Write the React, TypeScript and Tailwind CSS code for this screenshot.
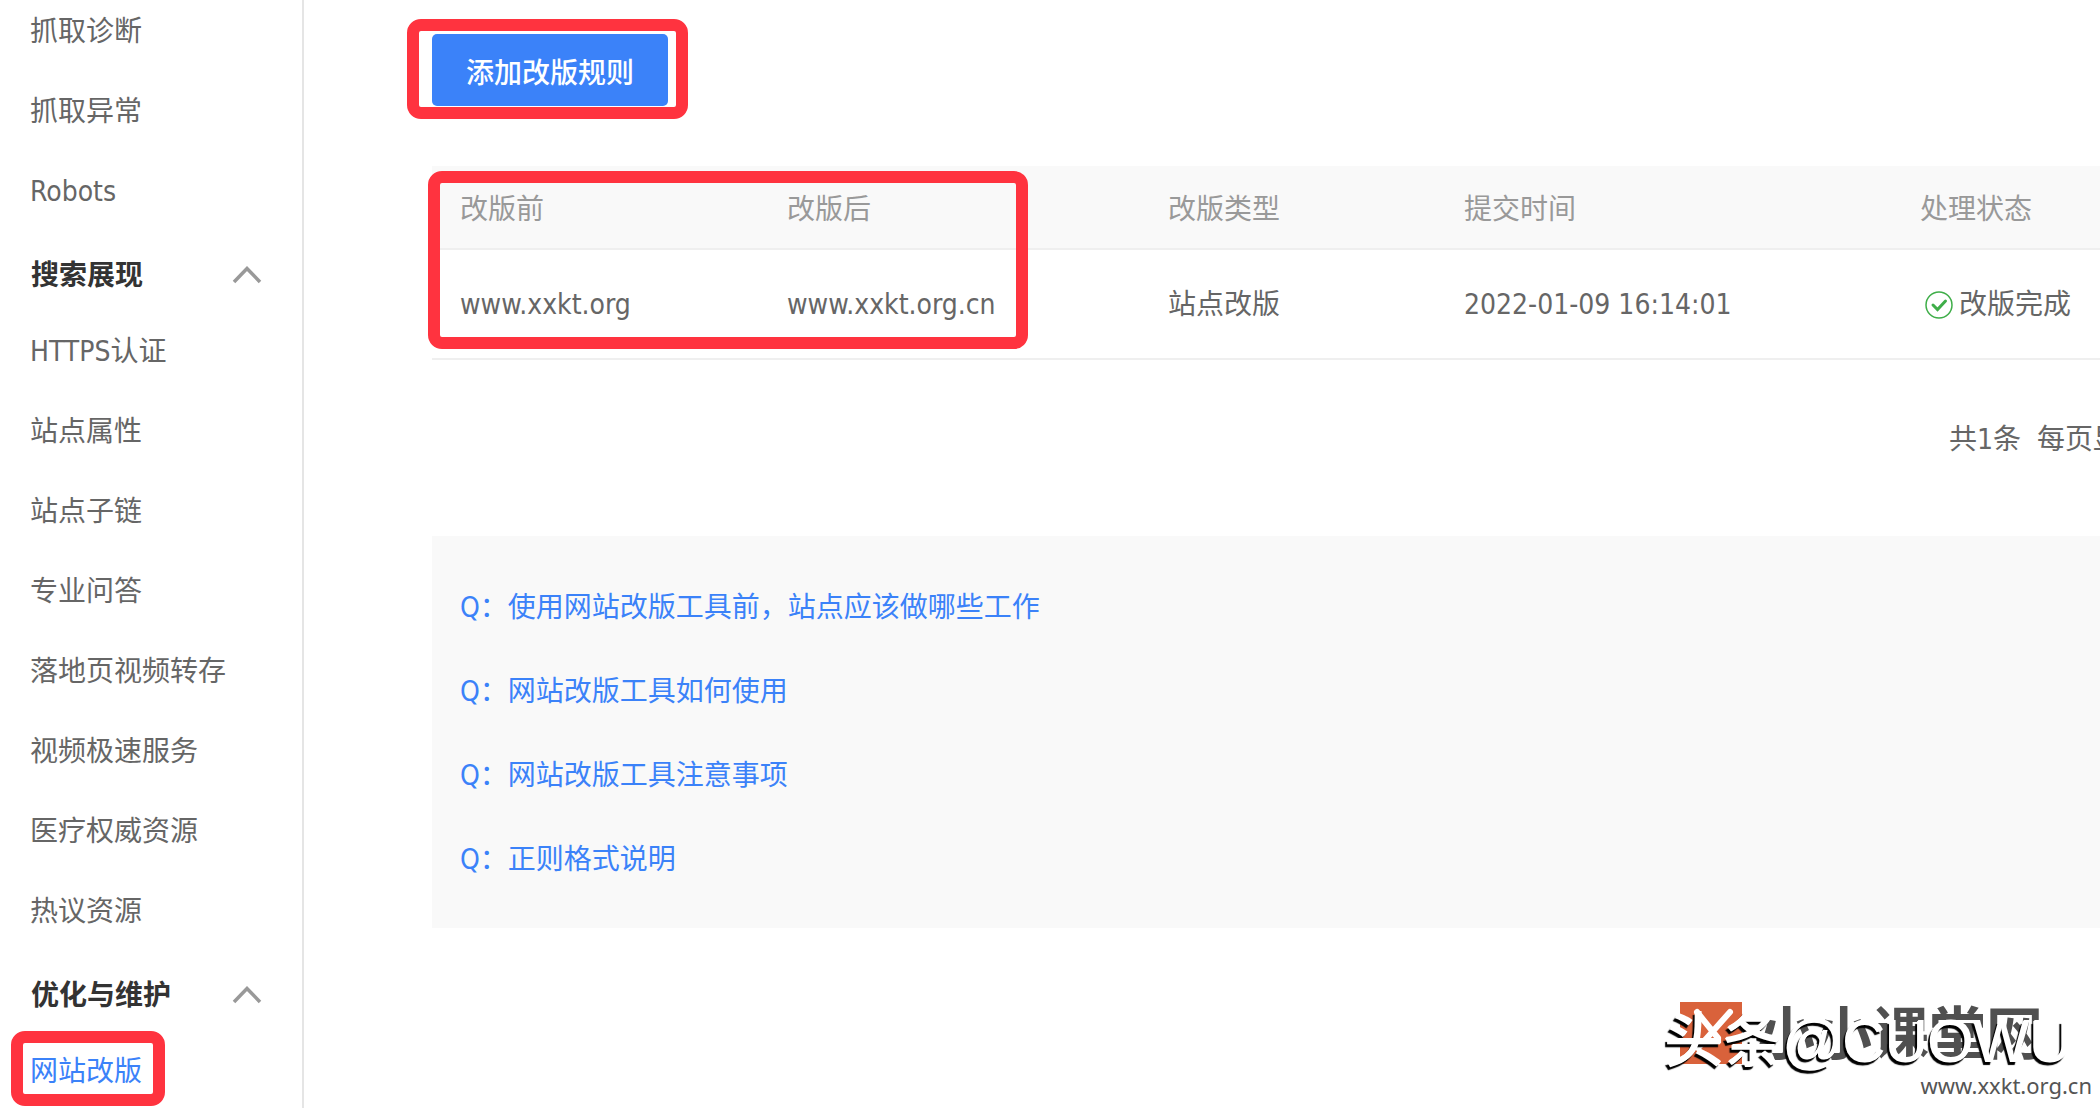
import type { ReactNode } from "react";

const BODY_FONT =
  "font-['DejaVu_Sans_Condensed','Noto_Sans_CJK_SC',sans-serif]";

function NavItem({ children }: { children: ReactNode }) {
  return (
    <li className="flex h-20 items-center pl-[30px]">
      <a href="#" className="text-[#666]">
        {children}
      </a>
    </li>
  );
}

function NavHeading({ children }: { children: ReactNode }) {
  return (
    <button
      type="button"
      className="flex h-20 w-full items-center justify-between pt-2 pr-10 pl-[31px] font-bold text-[#333]"
    >
      {children}
      <svg width="30" height="20" viewBox="0 0 30 20" fill="none" aria-hidden="true">
        <path d="M2 16 15 2.500l13 13.500" stroke="#999" strokeWidth="3.500" />
      </svg>
    </button>
  );
}

function Sidebar() {
  return (
    <nav className="w-[304px] shrink-0 border-r-2 border-[#e5e5e5]">
      <ul className="-mt-2">
        <NavItem>抓取诊断</NavItem>
        <NavItem>抓取异常</NavItem>
        <NavItem>Robots</NavItem>
      </ul>
      <NavHeading>搜索展现</NavHeading>
      <ul>
        <NavItem>HTTPS认证</NavItem>
        <NavItem>站点属性</NavItem>
        <NavItem>站点子链</NavItem>
        <NavItem>专业问答</NavItem>
        <NavItem>落地页视频转存</NavItem>
        <NavItem>视频极速服务</NavItem>
        <NavItem>医疗权威资源</NavItem>
        <NavItem>热议资源</NavItem>
      </ul>
      <NavHeading>优化与维护</NavHeading>
      <a
        href="#"
        aria-current="page"
        className="-mt-px ml-[11px] flex h-[75px] w-[154px] items-center rounded-[14px] border-12 border-[#ff333f] pt-1.5 pl-[7px] whitespace-nowrap text-[#3b82f9]"
      >
        网站改版
      </a>
    </nav>
  );
}

function StatusDone() {
  return (
    <span className="flex items-center gap-[5px] pl-1">
      <svg width="30" height="30" viewBox="0 0 30 30" fill="none" aria-hidden="true">
        <circle cx="15" cy="15" r="13" stroke="#3fae49" strokeWidth="1.500" />
        <path d="m9 15 4.500 4.500 8-8.500" stroke="#3fae49" strokeWidth="3" strokeLinecap="round" />
      </svg>
      改版完成
    </span>
  );
}

function RulesTable() {
  return (
    <div className="relative mt-[47px] ml-[25px]">
      <table className="w-full table-fixed border-separate border-spacing-0 text-left whitespace-nowrap">
        <colgroup>
          <col className="w-[355px]" />
          <col className="w-[381px]" />
          <col className="w-[296px]" />
          <col className="w-[456px]" />
          <col />
        </colgroup>
        <thead>
          <tr className="h-[84px] bg-[#f9f9f9] text-[#999] *:border-b-2 *:border-[#efefef] *:pt-1.5 *:font-normal">
            <th className="pl-7">改版前</th>
            <th>改版后</th>
            <th>改版类型</th>
            <th>提交时间</th>
            <th>处理状态</th>
          </tr>
        </thead>
        <tbody>
          <tr className="h-[110px] text-[#666] *:border-b-2 *:border-[#efefef] *:pt-0.5">
            <td className="pl-7">www.xxkt.org</td>
            <td>www.xxkt.org.cn</td>
            <td>站点改版</td>
            <td>2022-01-09 16:14:01</td>
            <td>
              <StatusDone />
            </td>
          </tr>
        </tbody>
      </table>
      <div className="pointer-events-none absolute top-[5px] -left-1 h-[178px] w-[600px] rounded-[14px] border-12 border-[#ff333f]" />
    </div>
  );
}

const QUESTIONS = [
  "使用网站改版工具前，站点应该做哪些工作",
  "网站改版工具如何使用",
  "网站改版工具注意事项",
  "正则格式说明",
];

function Faq() {
  return (
    <ul className="mt-[75px] ml-[25px] bg-[#f9f9f9] px-7 pt-[30px] pb-[26px] text-[#3b82f9]">
      {QUESTIONS.map((question) => (
        <li key={question} className="flex h-21 items-center">
          <a href="#">Q：{question}</a>
        </li>
      ))}
    </ul>
  );
}

function Watermark() {
  return (
    <div className="pointer-events-none absolute right-2 bottom-2 flex h-[98px] w-[428px] flex-col justify-between">
      <div className="relative flex items-start">
        <svg className="ml-4 shrink-0" width="62" height="62" viewBox="0 0 62 62" aria-hidden="true">
          <path d="M0 0h62v62H0z" fill="#d9623b" />
          <path d="M17 10 38 36M50 10 18 46" stroke="#fff" strokeWidth="6" strokeLinecap="round" />
        </svg>
        <span className="ml-4 text-[57px] leading-[64px] font-bold whitespace-nowrap text-[#505050]">
          小小课堂网
        </span>
        <span className="absolute top-1.5 left-0 font-['Liberation_Sans','Noto_Sans_CJK_SC',sans-serif] text-[59px] leading-[68px] font-medium whitespace-nowrap text-white [text-shadow:1px_-1px_0_#fff,-2px_3px_1px_#000]">
          头条@CUOWU
        </span>
      </div>
      <span className="self-end font-['Noto_Sans',sans-serif] text-[22px] leading-[30px] text-[#555]">
        www.xxkt.org.cn
      </span>
    </div>
  );
}

export default function App() {
  return (
    <div
      className={`relative flex min-h-screen overflow-hidden bg-white text-[28px] leading-[42px] ${BODY_FONT}`}
    >
      <Sidebar />
      <main className="min-w-0 flex-1 pt-[19px] pl-[103px]">
        <div className="h-[100px] w-[281px] rounded-[14px] border-12 border-[#ff333f] pt-[3px] pl-[13px]">
          <button
            type="button"
            className="h-[72px] w-[236px] rounded-[5px] bg-[#3b82f9] pt-2 font-medium text-white"
          >
            添加改版规则
          </button>
        </div>
        <RulesTable />
        <p className="mt-[59px] flex justify-end gap-4 whitespace-nowrap text-[#666]">
          <span>共1条</span>
          <span className="w-[63px]">每页显示</span>
        </p>
        <Faq />
      </main>
      <Watermark />
    </div>
  );
}
